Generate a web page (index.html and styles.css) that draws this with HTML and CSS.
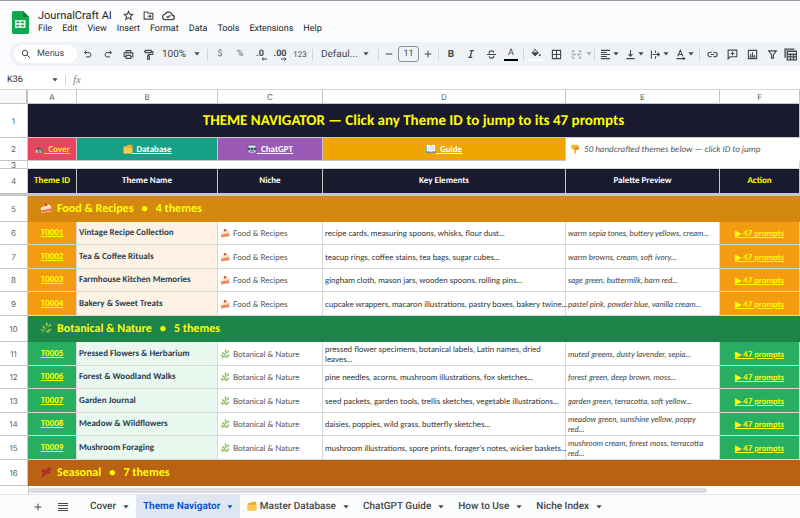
FILE: index.html
```html
<!DOCTYPE html>
<html lang="en">
<head>
<meta charset="utf-8">
<title>JournalCraft AI</title>
<link rel="stylesheet" href="styles.css">
</head>
<body>
<svg class="sprite" aria-hidden="true">
  <symbol id="caret" viewBox="0 0 6 4"><path d="M.4.3h5.2L3 3.4z" fill="currentColor"/></symbol>
  <symbol id="cake" viewBox="0 0 16 16"><path d="M1 8 11 3l4 3v7L2 15z" fill="#f7c9a4"/><path d="M1 8 11 3l4 3-13 4z" fill="#ffe6d0"/><path d="M2 11.500 15 9v2L2 13.500z" fill="#e2603f"/><circle cx="8" cy="3.500" r="2" fill="#e04a32"/><path d="M2 14.200 15 12.200V13L2 15z" fill="#d98a55"/></symbol>
  <symbol id="herb" viewBox="0 0 16 16"><g fill="none" stroke="#5f9c38" stroke-linecap="round"><path d="M3 15C7 12 9 8 9 2" stroke-width="1.200"/><path d="M8.500 8.500 13 4M6.500 12l7-1.500" stroke-width="1"/></g><g fill="#86c552"><ellipse cx="9" cy="3" rx="1.400" ry="2.600"/><ellipse cx="13" cy="4.500" rx="1.300" ry="2.500" transform="rotate(40 13 4.500)"/><ellipse cx="13" cy="10.500" rx="2.600" ry="1.300" transform="rotate(-10 13 10.500)"/><ellipse cx="5" cy="7" rx="1.300" ry="2.600" transform="rotate(-35 5 7)"/><ellipse cx="10.500" cy="13" rx="2.400" ry="1.200"/><ellipse cx="3" cy="11" rx="1.200" ry="2.200" transform="rotate(-50 3 11)"/></g></symbol>
  <symbol id="maple" viewBox="0 0 16 16"><path d="M1 5l4-.5L6 2l3 1 4-2 1 4 1.500 2-2.500 3-4 1.500-3 3-1-4-3-1 1.500-2z" fill="#d0392b"/><path d="M14 3 7 8l-4 6M7 8 2 6M8 7l5 2" fill="none" stroke="#8e3a22"/></symbol>
  <symbol id="folder" viewBox="0 0 16 16"><path d="M1 4l1-1h4l1-2h7l1 2v11l-1 1H1z" fill="#f0a92e"/><path d="M1 6h14v8l-1 1H1z" fill="#fcc94f"/></symbol>
  <symbol id="house" viewBox="0 0 16 16"><path d="M1 14c1-6 4-9 7-9s6 3 7 9z" fill="#5d9a66"/><path d="M3 9h9v5H3z" fill="#d9c8b4"/><path d="M2 9 7.500 4 13 9z" fill="#84563f"/><path d="M6 10h3v4H6z" fill="#7d6a5c"/><circle cx="13" cy="10" r="2.500" fill="#4f8a58"/></symbol>
  <symbol id="robot" viewBox="0 0 16 16"><rect x="2" y="2" width="12" height="12" rx="4" fill="#dfe5ea"/><rect x="1" y="6" width="14" height="4" rx="1" fill="#35495a"/><circle cx="5.500" cy="8" r="1.200" fill="#8fd6f5"/><circle cx="10.500" cy="8" r="1.200" fill="#8fd6f5"/><path d="M5 12h6" stroke="#6f7f8b"/><path d="M4 2h8V1H4z" fill="#35495a"/></symbol>
  <symbol id="book" viewBox="0 0 16 16"><path d="M0 3h16v11H0z" fill="#4d8fd0"/><path d="M1 2c3-1 5-1 7 1v10c-2-1.500-4-1.500-7-1zM15 2c-3-1-5-1-7 1v10c2-1.500 4-1.500 7-1z" fill="#fff"/><path d="M8 3v10M3 5h3M3 7h3M3 9h3M10 5h3M10 7h3M10 9h3" stroke="#b4bfcb" stroke-width="1" fill="none"/></symbol>
  <symbol id="point" viewBox="0 0 16 16"><path d="M3 1h8c3 0 4 2 4 4s-1 4-3 4.500L9.500 9.500V14c0 2-3 2-3 0V9L3 7.500C1 6 1 2 3 1z" fill="#fbb53c"/><path d="M9.500 5v4.500M12 5v4" stroke="#d98a1f" fill="none"/></symbol>
</svg>

<header class="app-header">
  <div class="title-area">
    <svg class="logo" viewBox="0 0 17 23" aria-hidden="true"><path d="M1.500 0H11l6 6v15.500q0 1.500-1.500 1.500h-14Q0 23 0 21.500v-20Q0 0 1.500 0z" fill="#12a84f"/><path d="M11 0v4.500Q11 6 12.500 6H17z" fill="#0b7d3a"/><path d="M3.800 9.800h9v6.400h-9zM8.300 9.800v6.400M3.800 13h9" fill="none" stroke="#fff" stroke-width="1.300"/></svg>
    <div class="title-stack">
      <div class="doc-line">
        <h1 class="doc-title">JournalCraft AI</h1>
        <button class="doc-btn" aria-label="Star"><svg class="i11" viewBox="0 0 24 24"><path d="M12 3l2.700 6 6.500.6-4.900 4.300 1.500 6.400L12 17l-5.800 3.300 1.500-6.400L2.800 9.600 9.300 9z"/></svg></button>
        <button class="doc-btn" aria-label="Move"><svg class="i11" viewBox="0 0 24 24"><path d="M2.500 4.500h7l2 2.500h10v13h-19zM10 13.500h7M14.500 10.500l3 3-3 3"/></svg></button>
        <button class="doc-btn" aria-label="Saved"><svg class="i12" viewBox="0 0 24 24"><path d="M6.500 19.500h12a4 4 0 0 0 .5-8 7 7 0 0 0-13.200-2A5 5 0 0 0 6.500 19.500zM8.500 13.500l2.500 2.500 4.500-4.500"/></svg></button>
      </div>
      <nav class="menus">
        <button>File</button><button>Edit</button><button>View</button><button>Insert</button><button>Format</button><button>Data</button><button>Tools</button><button>Extensions</button><button>Help</button>
      </nav>
    </div>
  </div>

  <div class="toolbar">
    <label class="search"><svg class="i10" viewBox="0 0 24 24"><circle cx="9.500" cy="9.500" r="6.500"/><path d="M14.500 14.500l7 7"/></svg><input type="text" placeholder="Menus" aria-label="Menus"></label>
    <button class="tool" aria-label="Undo"><svg class="i10" viewBox="0 0 24 24"><path d="M8 4 3.500 8.500 8 13M4 8.500h10.500a5.300 5.300 0 0 1 0 10.500H7"/></svg></button>
    <button class="tool" aria-label="Redo"><svg class="i10" viewBox="0 0 24 24"><path d="M16 4l4.500 4.500L16 13M20 8.500H9.500a5.300 5.300 0 0 0 0 10.500H17"/></svg></button>
    <button class="tool" aria-label="Print"><svg class="i11" viewBox="0 0 24 24"><path d="M7 8V3.500h10V8M6.500 17H2.500V8.500h19V17h-4M7 14h10v6.500H7z"/></svg></button>
    <button class="tool" aria-label="Paint format"><svg class="i11" viewBox="0 0 24 24"><path d="M5 3h13v5H5zM18 5.500h3.500V12H12v3M10 15h4v7h-4zM5 5.500H2"/></svg></button>
    <label class="pick zoom"><select aria-label="Zoom"><option>100%</option></select><svg class="caret"><use href="#caret"/></svg></label>
    <span class="sep"></span>
    <button class="tool soft">$</button>
    <button class="tool soft">%</button>
    <button class="tool dec" aria-label="Decrease decimal places">.0<svg class="arrow" viewBox="0 0 6 4"><path d="M6 2H1M2.500.5 1 2l1.500 1.500"/></svg></button>
    <button class="tool dec" aria-label="Increase decimal places">.00<svg class="arrow" viewBox="0 0 6 4"><path d="M0 2h5M3.500.5 5 2 3.500 3.500"/></svg></button>
    <button class="tool num">123</button>
    <span class="sep"></span>
    <label class="pick font"><select aria-label="Font"><option>Defaul...</option></select><svg class="caret"><use href="#caret"/></svg></label>
    <span class="sep"></span>
    <button class="tool slim" aria-label="Decrease font size"><svg class="i10" viewBox="0 0 24 24"><path d="M4 12h16"/></svg></button>
    <input class="size" type="text" value="11" aria-label="Font size">
    <button class="tool slim" aria-label="Increase font size"><svg class="i10" viewBox="0 0 24 24"><path d="M4 12h16M12 4v16"/></svg></button>
    <span class="sep"></span>
    <button class="tool bold">B</button>
    <button class="tool" aria-label="Italic"><svg class="i10 heavy" viewBox="0 0 24 24"><path d="M9 4h10M5 20h10M14 4l-4 16"/></svg></button>
    <button class="tool" aria-label="Strikethrough"><svg class="i11" viewBox="0 0 24 24"><path d="M2 12h20M17 8c-.5-3-2.500-4-5-4-3 0-5 1.500-5 3.500 0 1 .5 2 1.500 2.500M7 16c.5 3 2.500 4 5 4 3 0 5-1.500 5-3.500 0-.7-.2-1.200-.5-1.700"/></svg></button>
    <button class="tool text-color">A</button>
    <span class="sep"></span>
    <button class="tool fill-color" aria-label="Fill color"><svg class="i10" viewBox="0 0 24 24"><path d="M8 2l9.500 9.500L10 19l-7.500-7.500L10 4"/><path d="M4 11.500h13L10 18z" fill="currentColor"/><circle cx="21" cy="17" r="1.500" fill="currentColor"/></svg></button>
    <button class="tool" aria-label="Borders"><svg class="i11" viewBox="0 0 24 24"><path d="M3 3h18v18H3zM12 3v18M3 12h18"/></svg></button>
    <button class="tool faded" aria-label="Merge cells"><svg class="i11" viewBox="0 0 24 24"><path d="M8 4H3v4M16 4h5v4M8 20H3v-4M16 20h5v-4M1 12h8M6.500 9.500 9 12l-2.500 2.500M23 12h-8M17.500 9.500 15 12l2.500 2.500"/></svg></button>
    <svg class="caret faded"><use href="#caret"/></svg>
    <span class="sep"></span>
    <button class="tool duo" aria-label="Horizontal align"><svg class="i11" viewBox="0 0 24 24"><path d="M2 3h20M2 7.500h13M2 12h20M2 16.500h13M2 21h20"/></svg><svg class="caret"><use href="#caret"/></svg></button>
    <button class="tool duo" aria-label="Vertical align"><svg class="i11" viewBox="0 0 24 24"><path d="M12 2v13M7.500 11l4.500 4.500 4.500-4.500M3 21h18"/></svg><svg class="caret"><use href="#caret"/></svg></button>
    <button class="tool duo" aria-label="Text wrapping"><svg class="i11" viewBox="0 0 24 24"><path d="M3 3v18M12 3v5M12 16v5M6 12h14M16.500 8l4 4-4 4"/></svg><svg class="caret"><use href="#caret"/></svg></button>
    <button class="tool duo" aria-label="Text rotation"><svg class="i11" viewBox="0 0 24 24"><path d="M6 16 11.500 3 17 16M8 12h7M3 21h18M18 18l3 3-3 2.500"/></svg><svg class="caret"><use href="#caret"/></svg></button>
    <span class="sep"></span>
    <button class="tool" aria-label="Insert link"><svg class="i11" viewBox="0 0 24 24"><path d="M10.500 17H7A5 5 0 0 1 7 7h3.500M13.500 7H17a5 5 0 0 1 0 10h-3.500M8 12h8"/></svg></button>
    <button class="tool" aria-label="Insert comment"><svg class="i11" viewBox="0 0 24 24"><path d="M2.500 21.500v-19h19V17H6.500zM12 5.500v8.500M8 9.800h8"/></svg></button>
    <button class="tool" aria-label="Insert chart"><svg class="i11" viewBox="0 0 24 24"><path d="M3 3h18v18H3zM8 17v-6M12 17V7M16 17v-4M5 17.500h14"/></svg></button>
    <button class="tool" aria-label="Filter"><svg class="i11" viewBox="0 0 24 24"><path d="M3.500 4h17L14 12.500V20h-4v-7.500z"/></svg></button>
    <button class="tool slim" aria-label="Table views"><svg class="i12" viewBox="0 0 24 24"><path d="M2 18V2h17M6 6h17v16H6zM6 11.500h17M6 16.500h17M12 11.500V22M17.500 11.500V22"/></svg></button>
  </div>
</header>

<div class="formula-bar">
  <input class="name-box" type="text" value="K36" aria-label="Name box">
  <svg class="caret"><use href="#caret"/></svg>
  <span class="bar"></span>
  <label class="fx" for="formula">fx</label>
  <input class="formula" id="formula" type="text">
</div>

<main class="sheet">
  <table>
    <colgroup><col class="c-n"><col class="c-a"><col class="c-b"><col class="c-c"><col class="c-d"><col class="c-e"><col class="c-f"></colgroup>
    <thead>
      <tr class="letters"><th></th><th>A</th><th>B</th><th>C</th><th>D</th><th>E</th><th>F</th></tr>
    </thead>
    <tbody>
      <tr class="banner"><th>1</th><td colspan="6">THEME NAVIGATOR — Click any Theme ID to jump to its 47 prompts</td></tr>
      <tr class="links"><th>2</th>
        <td class="cover"><a href="#cover"><svg class="emo"><use href="#house"/></svg>&nbsp; Cover</a></td>
        <td class="database"><a href="#database"><svg class="emo"><use href="#folder"/></svg>&nbsp; Database</a></td>
        <td class="chatgpt"><a href="#chatgpt"><svg class="emo"><use href="#robot"/></svg>&nbsp; ChatGPT</a></td>
        <td class="guide"><a href="#guide"><svg class="emo"><use href="#book"/></svg>&nbsp; Guide</a></td>
        <td class="hint" colspan="2"><svg class="emo"><use href="#point"/></svg>&nbsp; 50 handcrafted themes below — click ID to jump</td></tr>
      <tr class="thin"><th><div>3</div></th><td colspan="6"></td></tr>
      <tr class="heads"><th>4</th><td class="hot">Theme ID</td><td>Theme Name</td><td>Niche</td><td>Key Elements</td><td>Palette Preview</td><td class="hot">Action</td></tr>
      <tr class="group food"><th>5</th><td colspan="6"><svg class="emo big"><use href="#cake"/></svg>Food &amp; Recipes &nbsp; • &nbsp; 4 themes</td></tr>
      <tr class="theme food"><th>6</th><td class="id"><a href="#T0001">T0001</a></td><td class="name">Vintage Recipe Collection</td><td class="niche"><svg class="emo"><use href="#cake"/></svg>Food &amp; Recipes</td><td class="keys">recipe cards, measuring spoons, whisks, flour dust...</td><td class="palette">warm sepia tones, buttery yellows, cream...</td><td class="go"><a href="#p1">▶ 47 prompts</a></td></tr>
      <tr class="theme food"><th>7</th><td class="id"><a href="#T0002">T0002</a></td><td class="name">Tea &amp; Coffee Rituals</td><td class="niche"><svg class="emo"><use href="#cake"/></svg>Food &amp; Recipes</td><td class="keys">teacup rings, coffee stains, tea bags, sugar cubes...</td><td class="palette">warm browns, cream, soft ivory...</td><td class="go"><a href="#p2">▶ 47 prompts</a></td></tr>
      <tr class="theme food"><th>8</th><td class="id"><a href="#T0003">T0003</a></td><td class="name">Farmhouse Kitchen Memories</td><td class="niche"><svg class="emo"><use href="#cake"/></svg>Food &amp; Recipes</td><td class="keys">gingham cloth, mason jars, wooden spoons, rolling pins...</td><td class="palette">sage green, buttermilk, barn red...</td><td class="go"><a href="#p3">▶ 47 prompts</a></td></tr>
      <tr class="theme food"><th>9</th><td class="id"><a href="#T0004">T0004</a></td><td class="name">Bakery &amp; Sweet Treats</td><td class="niche"><svg class="emo"><use href="#cake"/></svg>Food &amp; Recipes</td><td class="keys">cupcake wrappers, macaron illustrations, pastry boxes, bakery twine...</td><td class="palette">pastel pink, powder blue, vanilla cream...</td><td class="go"><a href="#p4">▶ 47 prompts</a></td></tr>
      <tr class="group plant"><th>10</th><td colspan="6"><svg class="emo big"><use href="#herb"/></svg>Botanical &amp; Nature &nbsp; • &nbsp; 5 themes</td></tr>
      <tr class="theme plant"><th>11</th><td class="id"><a href="#T0005">T0005</a></td><td class="name">Pressed Flowers &amp; Herbarium</td><td class="niche"><svg class="emo"><use href="#herb"/></svg>Botanical &amp; Nature</td><td class="keys">pressed flower specimens, botanical labels, Latin names, dried<br>leaves...</td><td class="palette">muted greens, dusty lavender, sepia...</td><td class="go"><a href="#p5">▶ 47 prompts</a></td></tr>
      <tr class="theme plant"><th>12</th><td class="id"><a href="#T0006">T0006</a></td><td class="name">Forest &amp; Woodland Walks</td><td class="niche"><svg class="emo"><use href="#herb"/></svg>Botanical &amp; Nature</td><td class="keys">pine needles, acorns, mushroom illustrations, fox sketches...</td><td class="palette">forest green, deep brown, moss...</td><td class="go"><a href="#p6">▶ 47 prompts</a></td></tr>
      <tr class="theme plant"><th>13</th><td class="id"><a href="#T0007">T0007</a></td><td class="name">Garden Journal</td><td class="niche"><svg class="emo"><use href="#herb"/></svg>Botanical &amp; Nature</td><td class="keys">seed packets, garden tools, trellis sketches, vegetable illustrations...</td><td class="palette">garden green, terracotta, soft yellow...</td><td class="go"><a href="#p7">▶ 47 prompts</a></td></tr>
      <tr class="theme plant"><th>14</th><td class="id"><a href="#T0008">T0008</a></td><td class="name">Meadow &amp; Wildflowers</td><td class="niche"><svg class="emo"><use href="#herb"/></svg>Botanical &amp; Nature</td><td class="keys">daisies, poppies, wild grass, butterfly sketches...</td><td class="palette">meadow green, sunshine yellow, poppy<br>red...</td><td class="go"><a href="#p8">▶ 47 prompts</a></td></tr>
      <tr class="theme plant"><th>15</th><td class="id"><a href="#T0009">T0009</a></td><td class="name">Mushroom Foraging</td><td class="niche"><svg class="emo"><use href="#herb"/></svg>Botanical &amp; Nature</td><td class="keys">mushroom illustrations, spore prints, forager's notes, wicker baskets...</td><td class="palette">mushroom cream, forest moss, terracotta<br>red...</td><td class="go"><a href="#p9">▶ 47 prompts</a></td></tr>
      <tr class="group season"><th>16</th><td colspan="6"><svg class="emo big"><use href="#maple"/></svg>Seasonal &nbsp; • &nbsp; 7 themes</td></tr>
    </tbody>
  </table>
  <div class="scroll"><div class="track"><div class="thumb"></div></div></div>
</main>

<footer class="tabs">
  <button class="tab-tool" aria-label="Add sheet"><svg class="i10" viewBox="0 0 24 24"><path d="M4 12h16M12 4v16"/></svg></button>
  <button class="tab-tool" aria-label="All sheets"><svg class="i10" viewBox="0 0 20 20"><path d="M0 3h20M0 7h20M0 13h20M0 17h20" stroke-width="2"/></svg></button>
  <button class="tab first">Cover<svg class="caret"><use href="#caret"/></svg></button>
  <button class="tab active">Theme Navigator<svg class="caret"><use href="#caret"/></svg></button>
  <button class="tab"><span><svg class="emo"><use href="#folder"/></svg>&nbsp;Master Database</span><svg class="caret"><use href="#caret"/></svg></button>
  <button class="tab">ChatGPT Guide<svg class="caret"><use href="#caret"/></svg></button>
  <button class="tab">How to Use<svg class="caret"><use href="#caret"/></svg></button>
  <button class="tab">Niche Index<svg class="caret"><use href="#caret"/></svg></button>
</footer>
</body>
</html>
```
FILE: styles.css
```css
* { box-sizing: border-box; }

body {
  margin: 0;
  min-height: 100vh;
  display: flex;
  flex-direction: column;
  overflow: hidden;
  background: #fff;
  color: #444746;
  font-family: Roboto, Inter, sans-serif;
  font-size: 9px;
  text-rendering: geometricPrecision;
}

button, input, select {
  margin: 0;
  padding: 0;
  border: 0;
  background: none;
  color: inherit;
  font: inherit;
  text-rendering: inherit;
  white-space: nowrap;
}

svg {
  flex: none;
  fill: none;
  stroke: currentColor;
  stroke-width: 2.4;
}

.sprite { position: absolute; width: 0; height: 0; }
.i10 { width: 10px; height: 10px; }
.i11 { width: 11px; height: 11px; }
.i12 { width: 13px; height: 13px; }
.heavy { stroke-width: 3; }
.caret { width: 6px; height: 4px; stroke: none; }
.emo { width: 10px; height: 10px; stroke: none; vertical-align: -2px; }

/* Header */
.app-header {
  padding: 7px 0 5px;
  border-top: 1px solid #9a9da3;
  background: #f9fbfd;
}

.title-area { display: flex; padding-left: 12px; }
.logo { width: 17px; height: 23px; margin-top: 3px; stroke: none; }
.title-stack { margin-left: 9px; }
.doc-line { display: flex; align-items: center; height: 15px; }

.doc-title {
  margin: 0 7px 0 0;
  font: 400 11px/15px Roboto, sans-serif;
  color: #1f1f1f;
}

.doc-btn {
  display: flex;
  justify-content: center;
  width: 20px;
}

.menus {
  display: flex;
  gap: 10px;
  height: 12px;
  color: #1f1f1f;
}

/* Toolbar */
.toolbar {
  display: flex;
  align-items: center;
  height: 24px;
  margin: 7px 0 0 10px;
  padding-left: 4px;
  border-radius: 12px 0 0 12px;
  background: #eff3f8;
  overflow: hidden;
}

.toolbar > * { flex: none; }

.search {
  display: flex;
  align-items: center;
  gap: 6px;
  width: 63px;
  height: 18px;
  margin-right: 1px;
  padding-left: 7px;
  border-radius: 9px;
  background: #fff;
}

.search input { width: 38px; }
.search input::placeholder { color: #444746; opacity: 1; }

.tool {
  display: flex;
  align-items: center;
  justify-content: center;
  width: 20px;
  height: 16px;
}

.slim { width: 16px; }
.duo { gap: 2px; width: 25px; }
.soft { color: #6a6d70; }
.num { font-size: 8px; }
.bold { font-weight: 700; font-size: 10px; }
.faded { color: #a9adb1; }

.dec { position: relative; font-size: 9px; font-weight: 700; }
.arrow { position: absolute; right: 3px; bottom: 1px; width: 6px; height: 4px; stroke-width: 1; }

.text-color {
  width: 14px;
  height: 13px;
  margin: 0 3px;
  border-bottom: 2px solid #000;
}

.fill-color {
  width: 14px;
  height: 13px;
  margin: 0 3px;
  border-bottom: 2px solid #fff;
}

.sep { width: 1px; height: 11px; margin: 0 2px; background: #d0d4d9; }

.pick { display: flex; align-items: center; justify-content: space-between; }
.pick select { appearance: none; font-size: 10px; }
.zoom { width: 47px; padding: 0 5px 0 4px; }
.font { width: 61px; padding: 0 7px 0 6px; }

.size {
  width: 21px;
  height: 16px;
  margin: 0 1px;
  border: 1px solid #8b8f93;
  border-radius: 3px;
  text-align: center;
}

/* Formula bar */
.formula-bar {
  display: flex;
  align-items: center;
  height: 18px;
  padding-left: 7px;
}

.name-box { width: 45px; color: #1f1f1f; }
.bar { width: 1px; height: 10px; margin: 0 7px 0 7px; background: #d0d4d9; }
.fx { font: italic 11px "Liberation Serif", serif; color: #7c8084; }
.formula { flex: 1; }

/* Grid */
.sheet {
  flex: 1;
  font-family: Carlito, Lato, sans-serif;
}

table {
  width: 100%;
  table-layout: fixed;
  border-spacing: 0;
  border-collapse: separate;
}

.c-n { width: 28px; }
.c-a { width: 49px; }
.c-b { width: 141px; }
.c-c { width: 105px; }
.c-e { width: 154px; }
.c-f { width: 80px; }

th, td {
  padding: 0 2px;
  border: solid #d5d9d9;
  border-width: 0 1px 1px 0;
  line-height: 10px;
  white-space: nowrap;
}

th {
  padding: 0;
  border-color: #c4c7c5;
  background: #fff;
  font: 400 8px/8px Inter, sans-serif;
  color: #575b5f;
}

.letters th { height: 15px; border-top: 1px solid #d5d7da; }
.letters th:first-child { border-right: 2px solid #bdc0c3; background: #f8f9fa; }

.banner td {
  height: 34px;
  background: #1a1a2e;
  border-color: #c4c7c5;
  color: #ff0;
  font-size: 15px;
  line-height: 18px;
  font-weight: 700;
  text-align: center;
}

.links td { height: 23px; border-color: #c4c7c5; text-align: center; }
.links a { color: #fff; font-weight: 700; }
.links .cover { background: #e94560; }
.links .cover a { color: #ffe030; }
.links .database { background: #16a085; }
.links .chatgpt { background: #9b59b6; }
.links .guide { background: #f0a500; }
.links .hint { padding-left: 4px; border-color: #fff; text-align: left; font-style: italic; color: #555; }

.thin div { height: 7px; line-height: 9px; overflow: hidden; }
.thin td { height: 8px; }

.heads th, .heads td { height: 27px; border-bottom: 3px solid #c6c6c6; }
.heads td {
  border-right-color: #c4c7c5;
  background: #1a1a2e;
  color: #fff;
  font-weight: 700;
  text-align: center;
}
.heads .hot { color: #ff0; }

.group td {
  height: 26px;
  padding-left: 12px;
  border-color: transparent;
  color: #ff0;
  font-size: 12px;
  line-height: 14px;
  font-weight: 700;
}
.big { width: 12px; height: 12px; margin-right: 5px; }
.group.food td { background: #d4880f; }
.group.plant td { background: #1e8449; }
.group.season td { background: #ba6214; }

.theme td { height: 24px; }
.theme:nth-child(even) td { height: 23px; }
.theme .id, .theme .go { text-align: center; font-weight: 700; }
.theme .id a, .theme .go a { color: #ff0; }
.food .id, .food .go { background: #f39c12; }
.plant .id, .plant .go { background: #27ae60; }
.theme .name { font-weight: 700; color: #2c3e50; }
.food .name { background: #fdf2e3; }
.plant .name { background: #e9f8ef; }
.niche, .keys, .palette, .theme .go { font-family: Lato, sans-serif; font-size: 8px; }
.niche { color: #555; }
.niche .emo { margin: 0 3px 0 0; }
.keys { color: #333; }
.palette { font-style: italic; color: #444; }

/* Horizontal scrollbar */
.scroll { padding-left: 28px; height: 9px; border-bottom: 1px solid #e3e5e8; }
.track { height: 8px; padding: 2px 0; border-left: 1px solid #c4c7c5; }
.thumb { width: 88%; height: 5px; border-radius: 3px; background: #dadce0; }

/* Sheet tabs */
.tabs {
  display: flex;
  height: 23px;
  padding-left: 25px;
  background: #f9fbfd;
}

.tab-tool { display: flex; align-items: center; justify-content: center; width: 25px; }

.tab {
  display: flex;
  align-items: center;
  gap: 7px;
  padding: 0 7px;
  font-size: 10px;
  font-weight: 500;
}

.first { margin-left: 8px; }
.active { background: #dfe6f2; color: #0b57d0; font-weight: 700; }
```
